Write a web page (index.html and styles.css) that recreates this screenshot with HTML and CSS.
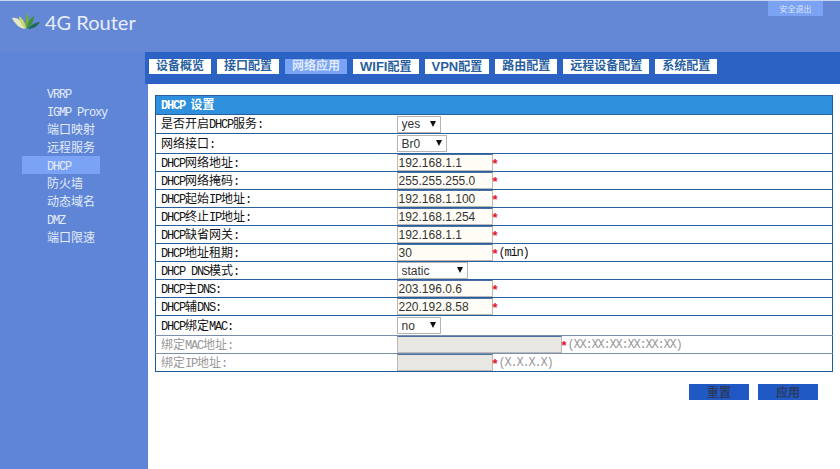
FILE: index.html
```html
<!DOCTYPE html>
<html lang="zh">
<head>
<meta charset="utf-8">
<title>4G Router</title>
<link rel="stylesheet" href="styles.css">
</head>
<body>
<header class="top">
  <div class="brand">
    <svg class="leaf" width="28" height="16" viewBox="0 0 28 16">
      <path d="M0 5C6 4 11 9 13 16C7 15 3 11 0 5Z" fill="#e4eac0"/>
      <path d="M7 3C11 6 14 11 14 16C10 13 7 8 7 3Z" fill="#c5d76e"/>
      <path d="M15 0C18 5 17 12 15 16C13 11 13 5 15 0Z" fill="#6fae3a"/>
      <path d="M22 3C22 8 19 13 15 16C15 10 18 6 22 3Z" fill="#3e8f3c"/>
      <path d="M28 9C24 9 19 12 16 16C20 16 25 14 28 9Z" fill="#1f6a50"/>
    </svg>
    <span class="brand-name">4G Router</span>
  </div>
  <button class="logout">安全退出</button>
</header>
<div class="body">
  <nav class="side">
    <a><span class="lat">VRRP</span></a>
    <a><span class="lat">IGMP Proxy</span></a>
    <a>端口映射</a>
    <a>远程服务</a>
    <a class="on"><span class="lat">DHCP</span></a>
    <a>防火墙</a>
    <a>动态域名</a>
    <a><span class="lat">DMZ</span></a>
    <a>端口限速</a>
  </nav>
  <div class="right">
    <div class="tabs">
      <a>设备概览</a><a>接口配置</a><a class="on">网络应用</a><a><span class="tab-lat">WIFI</span>配置</a><a><span class="tab-lat">VPN</span>配置</a><a>路由配置</a><a>远程设备配置</a><a>系统配置</a>
    </div>
    <main class="content">
      <table class="form">
        <colgroup><col class="col-label"><col></colgroup>
        <tr class="head"><th colspan="2"><span class="lat">DHCP</span> &nbsp;设置</th></tr>
        <tr class="r19"><td>是否开启<span class="lat">DHCP</span>服务<span class="lat">:</span></td><td><span class="sel w44"><select><option>yes</option></select></span></td></tr>
        <tr class="r20"><td>网络接口<span class="lat">:</span></td><td><span class="sel w50"><select><option>Br0</option></select></span></td></tr>
        <tr><td><span class="lat">DHCP</span>网络地址<span class="lat">:</span></td><td><input class="ip" value="192.168.1.1"><i>*</i></td></tr>
        <tr><td><span class="lat">DHCP</span>网络掩码<span class="lat">:</span></td><td><input class="ip" value="255.255.255.0"><i>*</i></td></tr>
        <tr><td><span class="lat">DHCP</span>起始<span class="lat">IP</span>地址<span class="lat">:</span></td><td><input class="ip" value="192.168.1.100"><i>*</i></td></tr>
        <tr><td><span class="lat">DHCP</span>终止<span class="lat">IP</span>地址<span class="lat">:</span></td><td><input class="ip" value="192.168.1.254"><i>*</i></td></tr>
        <tr><td><span class="lat">DHCP</span>缺省网关<span class="lat">:</span></td><td><input class="ip" value="192.168.1.1"><i>*</i></td></tr>
        <tr><td><span class="lat">DHCP</span>地址租期<span class="lat">:</span></td><td><input class="ip" value="30"><i>*</i><span class="lat">(min)</span></td></tr>
        <tr><td><span class="lat">DHCP DNS</span>模式<span class="lat">:</span></td><td><span class="sel w71"><select><option>static</option></select></span></td></tr>
        <tr><td><span class="lat">DHCP</span>主<span class="lat">DNS:</span></td><td><input class="ip" value="203.196.0.6"><i>*</i></td></tr>
        <tr><td><span class="lat">DHCP</span>辅<span class="lat">DNS:</span></td><td><input class="ip" value="220.192.8.58"><i>*</i></td></tr>
        <tr class="r20"><td><span class="lat">DHCP</span>绑定<span class="lat">MAC:</span></td><td><span class="sel w44"><select><option>no</option></select></span></td></tr>
        <tr class="off"><td>绑定<span class="lat">MAC</span>地址<span class="lat">:</span></td><td><input class="ip wide" disabled><i>*</i><span class="lat">(XX:XX:XX:XX:XX:XX)</span></td></tr>
        <tr class="off"><td>绑定<span class="lat">IP</span>地址<span class="lat">:</span></td><td><input class="ip" disabled><i>*</i><span class="lat">(X.X.X.X)</span></td></tr>
      </table>
      <div class="actions">
        <button class="btn">重置</button>
        <button class="btn">应用</button>
      </div>
    </main>
  </div>
</div>
</body>
</html>
```
FILE: styles.css
```css
* { box-sizing: border-box; }
html, body { margin: 0; height: 100%; }
body {
  display: flex;
  flex-direction: column;
  height: 469px;
  overflow: hidden;
  background: #5f86d6;
  font: 12px "Noto Sans CJK SC", "Liberation Sans", sans-serif;
  color: #111;
}
.lat {
  font-family: "Liberation Mono", monospace;
  font-size: 12px;
  line-height: 14px;
  letter-spacing: -1.2px;
}
.top {
  height: 52px;
  flex: none;
  display: flex;
  justify-content: space-between;
  align-items: flex-start;
  background: #6488d6;
  border-top: 1px solid #c9d6f0;
  padding-right: 17px;
}
.brand {
  display: flex;
  align-items: flex-start;
  gap: 5px;
  padding: 7px 0 0 12px;
}
.leaf { margin-top: 5px; }
.brand-name {
  font: 20px/28px Lato, sans-serif;
  color: #e8eefa;
}
.logout {
  width: 55px;
  height: 15px;
  padding: 0;
  border: 0;
  background: #7ba2f3;
  color: #dbe6fb;
  font: 8px/15px "Noto Sans CJK SC", sans-serif;
}
.body { flex: 1; display: flex; min-height: 0; }
.side {
  width: 145px;
  flex: none;
  padding: 32px 45px 0 22px;
  display: flex;
  flex-direction: column;
}
.side a {
  height: 18px;
  line-height: 18px;
  padding-left: 25px;
  color: #e3ebfa;
  white-space: nowrap;
}
.side a.on { background: #7aa3f5; }
.right { flex: 1; display: flex; flex-direction: column; min-width: 0; }
.tabs {
  height: 32px;
  flex: none;
  display: flex;
  gap: 6px;
  padding: 7px 0 0 4px;
  background: #2b62c4;
}
.tabs a {
  height: 15px;
  padding: 0 7px;
  background: #fff;
  color: #2a5f9f;
  font: bold 12px/15px "Liberation Sans", "Noto Sans CJK SC", sans-serif;
  white-space: nowrap;
}
.tab-lat { font-size: 13px; }
.tabs a.on { background: #7aa3f5; color: #dfe9fb; }
.content {
  flex: 1;
  margin-left: 3px;
  padding: 11px 7px 0;
  background: #fff;
}
.form {
  width: 678px;
  border-collapse: collapse;
  border: 1px solid #1f5a9e;
  table-layout: fixed;
}
.col-label { width: 241px; }
.form tr { height: 18px; }
.form tr.r19 { height: 19px; }
.form tr.r20 { height: 20px; }
.form tr.head { height: 19px; }
.form td, .form th {
  padding: 0;
  line-height: 14px;
  white-space: nowrap;
  border-top: 1px solid #2a5f9e;
}
.form td:first-child { padding-left: 5px; }
.form th {
  padding-left: 5px;
  text-align: left;
  background: #2e90dc;
  color: #fff;
  font-weight: bold;
}
.form tr.off td { color: #999; border-top-color: #7a8fb0; }
.form i {
  display: inline-block;
  padding-top: 3px;
  color: #e8102a;
  font: bold 13px/13px "Liberation Sans", sans-serif;
  margin: 0 1px 0 0;
  vertical-align: top;
}
.ip {
  display: inline-block;
  width: 96px;
  height: 17px;
  padding: 0 0 0 1px;
  vertical-align: top;
  border: 1px solid;
  border-color: #4a6fa5 #b9b9b9 #b9b9b9 #b9b9b9;
  background: #fffdf5;
  color: #333;
  font: 12px "Liberation Sans", sans-serif;
  outline: 0;
}
.ip.wide { width: 165px; }
.ip:disabled { background: #e9e7e2; }
.sel { position: relative; display: inline-block; vertical-align: top; height: 17px; }
.w44 { width: 44px; }
.w50 { width: 50px; }
.w71 { width: 71px; }
.sel select {
  display: block;
  appearance: none;
  width: 100%;
  height: 100%;
  padding: 0 0 0 4px;
  border: 1px solid #b4b4b4;
  border-radius: 0;
  background: #fff;
  color: #333;
  font: 12px "Liberation Sans", sans-serif;
}
.sel::after {
  content: "";
  position: absolute;
  right: 5px;
  top: 5px;
  border: 3px solid transparent;
  border-top: 6px solid #111;
  border-bottom: 0;
}
.actions {
  display: flex;
  justify-content: flex-end;
  gap: 9px;
  margin-top: 12px;
  padding-right: 15px;
}
.btn {
  width: 60px;
  height: 16px;
  padding: 0;
  border: 0;
  background: #2159c4;
  color: #2a3a60;
  font: bold 12px/16px "Noto Sans CJK SC", sans-serif;
}
```
